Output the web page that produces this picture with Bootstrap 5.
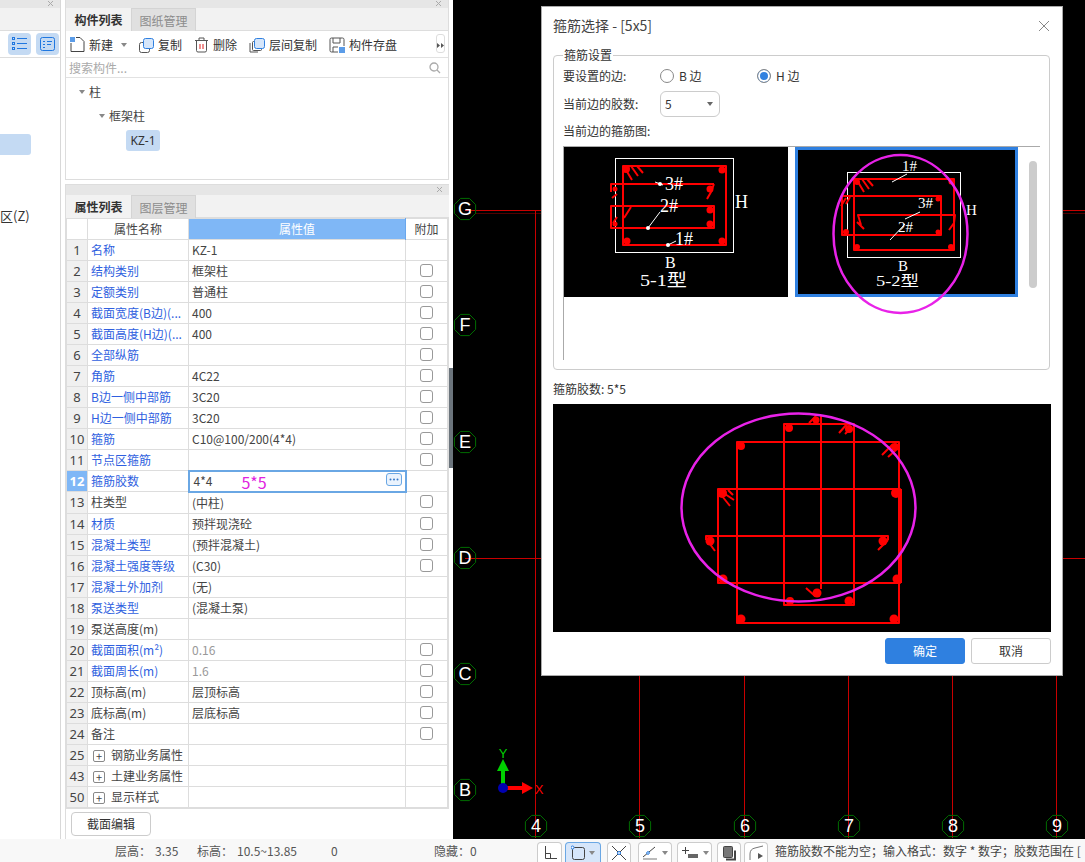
<!DOCTYPE html>
<html lang="zh">
<head>
  <meta charset="UTF-8" />
  <title>箍筋选择</title>
  <link rel="stylesheet" href="https://cdn.jsdelivr.net/npm/bootstrap@5.3.2/dist/css/bootstrap.min.css"/>
  <style>
    html, body { height: 862px; overflow: hidden; }
    body { font-family: "Noto Sans CJK SC", "Noto Sans", sans-serif; font-size: 12px; color: #333; background: #fff; }
    .app-main { height: 839px; }
    .side-strip { width: 61px; border-right: 1px solid #d8d8d8; overflow: hidden; }
    .pane-head { height: 8px; background: #e6e6e6; position: relative; }
    .pane-head svg { position: absolute; right: 5px; top: 0; }
    .pane-head-tall { height: 11px; border-top: 1px solid #ddd; }
    .strip-tabs { height: 23px; background: #f2f2f2; border-bottom: 1px solid #ddd; }
    .side-tools { height: 27px; padding: 2px 2px 0 8px; gap: 5px; border-bottom: 1px solid #ddd; }
    .sicon { width: 23px; height: 22px; background: #c4daf3; border-radius: 4px; }
    .strip-sel { width: 31px; height: 21px; background: #c4daf3; border-radius: 0 3px 3px 0; margin-top: 76px; }
    .strip-z { margin-top: 52px; font-size: 13px; line-height: 18px; }
    .center-col { width: 384px; margin-left: 4px; }
    .pane-top { height: 180px; border: 1px solid #ddd; border-top: 0; }
    .pane-bottom { margin-top: 4px; height: 655px; border-left: 1px solid #ddd; }
    .tabbar { height: 23px; background: #f2f2f2; border-bottom: 1px solid #ddd; flex-wrap: nowrap; }
    .tabbar .nav-link { width: 65px; height: 23px; padding: 0; text-align: center; line-height: 24px; font-size: 12px; }
    .tab-on { color: #333; font-weight: 700; background: #f2f2f2; }
    .tab-off { color: #8c8c8c; background: #e0e0e0; border: 1px solid #d4d4d4; border-bottom: 0; }
    .toolrow { height: 27px; border-bottom: 1px solid #e2e2e2; padding: 2px 0 0 4px; position: relative; }
    .tbtn { gap: 4px; font-size: 12px; line-height: 16px; white-space: nowrap; }
    .tbtn-copy { margin-left: 11px; }
    .tbtn-del { margin-left: 12px; }
    .tbtn-floor { margin-left: 12px; }
    .tbtn-save { margin-left: 12px; }
    .drop-tri { width: 0; height: 0; border: 3px solid transparent; border-top: 4px solid #888; border-bottom: 0; }
    .more-btn { position: absolute; right: 3px; top: 3px; width: 9px; height: 19px; border: 1px solid #ddd; border-radius: 3px; background: #fff; }
    .searchrow { height: 20px; border-bottom: 1px solid #e2e2e2; padding: 0 7px 0 3px; color: #aaa; font-size: 12px; }
    .tree-row { line-height: 16px; height: 16px; color: #444; }
    .tree-one { margin: 6px 0 0 13px; gap: 4px; }
    .tree-two { margin: 8px 0 0 33px; gap: 4px; }
    .tree-chip { margin: 6px 0 0 60px; width: 34px; height: 21px; line-height: 21px; text-align: center; background: #c4daf3; border-radius: 3px; font-family: "Noto Sans", sans-serif; }
    .proptable-wrap { width: 383px; border-bottom: 1px solid #ddd; border-right: 1px solid #ddd; }
    .proptable { table-layout: fixed; width: 381px; font-size: 12px; border-color: #ddd; color: #333; }
    .proptable > :not(caption) > * > * { padding: 0 3px; height: 21px; line-height: 20px; white-space: nowrap; overflow: hidden; color: #444; box-shadow: none; }
    .proptable > thead > tr > * { height: 21px; font-weight: 400; text-align: center; background: #fff; }
    .proptable > thead > tr > .head-on { background: #7fb7f6; color: #fff; border-color: #6aa7ec; }
    .proptable > tbody > tr > .num { text-align: center; background: #f0f0f0; padding: 0; font-family: "Noto Sans", sans-serif; font-size: 13px; }
    .proptable > tbody > tr > .num-on { background: #7fb7f6; color: #fff; font-weight: 700; }
    .proptable > tbody > tr > .lbl-blue { color: #2f5fe0; }
    .proptable > tbody > tr > .val-grey { color: #999; }
    .proptable > tbody > tr > .val-edit { border: 2px solid #6aa7e4; padding: 0 3px 0 4px; position: relative; line-height: 17px; overflow: visible; }
    .edit-hint { color: #e022e0; font-size: 16px; line-height: 17px; margin-left: 29px; vertical-align: -3px; }
    .edit-more { position: absolute; right: 3px; top: 1px; width: 16px; height: 13px; border: 1px solid #6aa7e4; border-radius: 3px; background: #eaf3fd; }
    .edit-more svg { display: block; }
    .chk { width: 13px; height: 13px; margin: 3px auto 0; border: 1px solid #999; border-radius: 3px; display: block; float: none; }
    .plusbox { display: inline-block; width: 12px; height: 12px; border: 1px solid #888; border-radius: 2px; line-height: 10px; text-align: center; font-size: 11px; margin: 0 6px 0 2px; vertical-align: -1px; }
    .section-btn { width: 80px; height: 24px; padding: 0; margin: 3px 0 0 5px; font-size: 12px; line-height: 22px; color: #333; background: #fff; border: 1px solid #ccc; border-radius: 4px; }
    .split-col { width: 4px; }
    .split-grip { width: 4px; height: 100px; background: #6b747c; margin-top: 368px; }
    .cad-view { background: #000; position: relative; overflow: hidden; }
    .cad-svg { position: absolute; left: 0; top: 0; }
    .dlg { position: absolute; left: 88px; top: 6px; width: 522px; height: 670px; background: #fff; border: 1px solid #aaa; }
    .dlg-title { height: 40px; padding: 0 11px 3px; font-size: 14px; color: #444; }
    .close-x { margin-right: 1px; }
    .dlg-set { margin: 0 12px 0 11px; padding: 0 9px; border: 1px solid #ccc; border-radius: 4px; height: 323px; }
    .dlg-set legend { float: none; width: auto; margin: 0; padding: 0 1px; font-size: 12px; line-height: 16px; }
    .set-row { height: 26px; }
    .set-row-sel { margin-top: 2px; }
    .set-lab { width: 97px; }
    .radio-lab { width: 97px; gap: 2px; font-size: 12px; }
    .rd { width: 14px; height: 14px; margin: 0 3px 0 0; border: 1px solid #888; float: none; flex-shrink: 0; }
    .rd:checked { background-color: #2f80e0; background-image: none; border-color: #888; box-shadow: inset 0 0 0 2px #fff; }
    .sel-five { width: 60px; height: 26px; padding: 0 0 0 4px; font-size: 12px; border-color: #ccc; background-image: url("data:image/svg+xml,%3csvg xmlns='http://www.w3.org/2000/svg' viewBox='0 0 8 5'%3e%3cpath fill='%23666' d='M1 0h6L4 4z'/%3e%3c/svg%3e"); background-position: right 5px center; background-size: 8px 5px; color: #333; }
    .list-lab { height: 18px; line-height: 18px; margin-top: 5px; }
    .shapes { height: 214px; margin-top: 6px; border-top: 1px solid #aaa; border-left: 1px solid #aaa; gap: 7px; }
    .thumb { display: block; flex-shrink: 0; }
    .thumb-bar { width: 8px; height: 127px; margin: 14px 0 0 4px; background: #ccc; border-radius: 4px; }
    .dlg-count { height: 34px; padding: 10px 0 0 11px; line-height: 18px; }
    .dlg-prev { display: block; margin: 0 0 0 11px; }
    .dlg-foot { margin: 6px 11px 0 0; gap: 6px; }
    .btn-ok, .btn-no { width: 80px; height: 26px; padding: 0; font-size: 12px; line-height: 24px; border-radius: 3px; }
    .btn-ok { background: #2f80e0; border-color: #2f80e0; color: #fff; }
    .btn-no { background: #fff; border-color: #ccc; color: #333; }
    .dlg-marks { position: absolute; left: -1px; top: -1px; pointer-events: none; }
    .statusbar { height: 23px; background: #f8f8f8; font-size: 12px; white-space: nowrap; overflow: hidden; }
    .stat-left { width: 537px; padding-left: 115px; line-height: 23px; color: #555; flex-shrink: 0; }
    .stat-a { width: 82px; } .stat-b { width: 134px; } .stat-c { width: 103px; }
    .stat-val { margin-left: 4px; }
    .stbtn { height: 20px; margin-top: 3px; border: 1px solid #ccc; border-bottom: 0; border-radius: 4px 4px 0 0; background: #fff; flex-shrink: 0; justify-content: center; gap: 4px; }
    .stbtn-on { background: #d6e6fa; border-color: #6aa7e4; }
    .stb-1 { width: 25px; }
    .stb-2 { width: 36px; margin-left: 3px; }
    .stb-3 { width: 24px; margin-left: 6px; }
    .stb-4 { width: 34px; margin-left: 7px; }
    .stb-5 { width: 35px; margin-left: 5px; }
    .stb-6 { width: 24px; margin-left: 5px; }
    .stb-7 { width: 24px; margin-left: 3px; }
    .stat-msg { margin-left: 7px; line-height: 23px; color: #444; }
  </style>
</head>
<body>
  <div class="app-main d-flex">
    <!-- panel izquierdo recortado -->
    <div class="side-strip flex-shrink-0">
      <div class="pane-head"><svg width="9" height="8"><path d="M2 1l5 5M7 1l-5 5" stroke="#aaa" fill="none"/></svg></div>
      <div class="strip-tabs"></div>
      <div class="side-tools d-flex">
        <div class="sicon flex-shrink-0"><svg width="23" height="22"><g fill="none" stroke="#1f77e0"><rect x="4.500" y="4.500" width="2" height="2"/><rect x="4.500" y="9.500" width="2" height="2"/><rect x="4.500" y="14.500" width="2" height="2"/><path d="M9 5.500h10M9 10.500h10M9 15.500h10"/></g></svg></div>
        <div class="sicon flex-shrink-0"><svg width="23" height="22"><g fill="none" stroke="#1f77e0"><rect x="4.500" y="4.500" width="14" height="13" rx="2"/><path d="M7 8.500h2M11 8.500h5M7 11.500h2M11 11.500h4M7 14.500h2"/></g></svg></div>
      </div>
      <div class="strip-sel"></div>
      <div class="strip-z">区(Z)</div>
    </div>

    <div class="center-col flex-shrink-0">
      <div class="pane-top">
        <div class="pane-head"><svg width="9" height="8"><path d="M2 1l5 5M7 1l-5 5" stroke="#aaa" fill="none"/></svg></div>
        <div class="nav tabbar">
          <a class="nav-link tab-on">构件列表</a>
          <a class="nav-link tab-off">图纸管理</a>
        </div>
        <div class="toolrow d-flex align-items-center">
          <div class="tbtn d-flex align-items-center">
            <svg width="15" height="16"><rect x="0" y="0" width="5" height="5" fill="#5b9ce8"/><path d="M1 6v8.500h13v-10l-4-4H6" fill="none" stroke="#444"/></svg>新建
          </div>
          <div class="drop-tri ms-2"></div>
          <div class="tbtn tbtn-copy d-flex align-items-center">
            <svg width="16" height="16"><rect x="1.500" y="5.500" width="10" height="10" rx="2" fill="#fff" stroke="#555"/><rect x="5.500" y="1.500" width="10" height="10" rx="2" fill="#d6e6fa" stroke="#2f80e0"/></svg>复制
          </div>
          <div class="tbtn tbtn-del d-flex align-items-center">
            <svg width="15" height="16"><path d="M1 3.500h13M5 3V1h5v2M2.500 4v9.500a1.500 1.500 0 0 0 1.500 1.500h7a1.500 1.500 0 0 0 1.500-1.500V4" fill="none" stroke="#555"/><path d="M6 7v5M9 7v5" stroke="#e02020"/></svg>删除
          </div>
          <div class="tbtn tbtn-floor d-flex align-items-center">
            <svg width="16" height="16"><path d="M1 6v9h8" fill="none" stroke="#555"/><rect x="3.500" y="4.500" width="9" height="9" rx="1" fill="#fff" stroke="#555"/><rect x="5.500" y="1.500" width="10" height="10" rx="2" fill="#d6e6fa" stroke="#2f80e0"/></svg>层间复制
          </div>
          <div class="tbtn tbtn-save d-flex align-items-center">
            <svg width="16" height="16"><path d="M9 15H2.500A1.500 1.500 0 0 1 1 13.500v-11A1.500 1.500 0 0 1 2.500 1h11A1.500 1.500 0 0 1 15 2.500V9M4 1v5h7V1M4 15v-5h5" fill="none" stroke="#555"/><rect x="10" y="10" width="6" height="6" fill="#5b9ce8"/></svg>构件存盘
          </div>
          <div class="more-btn"><svg width="7" height="17"><path d="M0 6l3 2.500L0 11zM4 6l3 2.500L4 11z" fill="#555"/></svg></div>
        </div>
        <div class="searchrow d-flex align-items-center justify-content-between">
          <span>搜索构件...</span>
          <svg width="12" height="12"><circle cx="5" cy="5" r="4" fill="none" stroke="#aaa" stroke-width="1.300"/><path d="M8 8l3 3" stroke="#aaa" stroke-width="1.300"/></svg>
        </div>
        <div class="tree-row tree-one d-flex align-items-center"><span class="drop-tri"></span>柱</div>
        <div class="tree-row tree-two d-flex align-items-center"><span class="drop-tri"></span>框架柱</div>
        <div class="tree-chip">KZ-1</div>
      </div>

      <div class="pane-bottom">
        <div class="pane-head pane-head-tall"><svg width="9" height="9"><path d="M2 2l5 5M7 2l-5 5" stroke="#aaa" fill="none"/></svg></div>
        <div class="nav tabbar">
          <a class="nav-link tab-on">属性列表</a>
          <a class="nav-link tab-off">图层管理</a>
        </div>
        <div class="proptable-wrap">
          <table class="table table-bordered proptable mb-0">
            <colgroup><col style="width:21px"><col style="width:101px"><col style="width:217px"><col style="width:42px"></colgroup>
            <thead><tr><th></th><th>属性名称</th><th class="head-on">属性值</th><th>附加</th></tr></thead>
            <tbody id="prop-body"></tbody>
          </table>
        </div>
        <button type="button" class="btn section-btn">截面编辑</button>
      </div>
    </div>

    <div class="split-col flex-shrink-0"><div class="split-grip"></div></div>

    <div class="cad-view flex-grow-1">
      <svg id="cad-svg" class="cad-svg" width="632" height="839" viewBox="453 0 632 839"></svg>

      <div class="dlg">
        <div class="dlg-title d-flex align-items-center justify-content-between">
          <span>箍筋选择 - [5x5]</span>
          <svg class="close-x" width="12" height="12"><path d="M1 1l10 10M11 1L1 11" stroke="#888" fill="none"/></svg>
        </div>
        <fieldset class="dlg-set">
          <legend>箍筋设置</legend>
          <div class="set-row d-flex align-items-center">
            <div class="set-lab">要设置的边:</div>
            <label class="radio-lab d-flex align-items-center"><input class="form-check-input rd" type="radio" name="lado"> B 边</label>
            <label class="radio-lab d-flex align-items-center"><input class="form-check-input rd" type="radio" name="lado" checked> H 边</label>
          </div>
          <div class="set-row set-row-sel d-flex align-items-center">
            <div class="set-lab">当前边的胶数:</div>
            <select class="form-select sel-five"><option>5</option></select>
          </div>
          <div class="list-lab">当前边的箍筋图:</div>
          <div class="shapes d-flex align-items-start">
            <svg class="thumb" width="224" height="150" viewBox="564 147 224 150">
              <rect x="564" y="147" width="224" height="150" fill="#000"/>
              <rect x="615.500" y="158.500" width="118" height="94" fill="none" stroke="#fff"/>
              <g fill="none" stroke="#f00" stroke-width="2" stroke-linejoin="round">
                <rect x="623" y="166" width="103" height="79"/>
                <path d="M611 192v-8h103M714 184l-3 8-4 7M611 206h103v22H611z"/>
                <path d="M626 170l6 10M631 166l7 10M637 166l6 7M624 218l7-11M617 194l-5 4M617 217l-4 6"/>
              </g>
              <g fill="#f00"><circle cx="626" cy="169" r="4"/><circle cx="722" cy="170" r="3.500"/><circle cx="627" cy="241" r="3.500"/><circle cx="722" cy="241" r="3.500"/><circle cx="710" cy="189" r="3.500"/><circle cx="710" cy="210" r="3.500"/><circle cx="710" cy="224" r="3.500"/><circle cx="615" cy="189" r="2.500"/><circle cx="615" cy="224" r="2.500"/></g>
              <g fill="#fff"><circle cx="660" cy="184" r="2"/><circle cx="648" cy="228" r="2"/><circle cx="668" cy="245" r="2"/></g>
              <path d="M655 182l8 3M648 228l12-16M668 245l8-4" stroke="#fff" fill="none"/>
              <g fill="#fff" font-family="Liberation Serif, serif" font-size="18">
                <text x="665" y="190">3#</text><text x="660" y="212">2#</text><text x="675" y="245">1#</text><text x="735" y="208">H</text><text x="665" y="268" font-size="16">B</text>
                <text x="640" y="286" font-size="17" textLength="47" lengthAdjust="spacingAndGlyphs" font-family="Liberation Serif, Noto Sans CJK SC, serif">5-1型</text>
              </g>
            </svg>
            <svg class="thumb" width="223" height="150" viewBox="795 147 223 150">
              <rect x="795" y="147" width="223" height="150" fill="#000"/>
              <rect x="796.500" y="148.500" width="220" height="147" fill="none" stroke="#2f80e0" stroke-width="3"/>
              <rect x="847.500" y="172.500" width="113" height="85" fill="none" stroke="#fff"/>
              <g fill="none" stroke="#f00" stroke-width="2" stroke-linejoin="round">
                <rect x="854" y="179" width="100" height="71"/>
                <rect x="842" y="196" width="99" height="39"/>
                <path d="M861 225l-3-10h97l-1 8-5 7M857 222l7 7"/>
                <path d="M858 182l6 10M862 179l7 10M867 179l6 7M846 198l-5 8M850 197l-4 7"/>
              </g>
              <g fill="#f00"><circle cx="857" cy="182" r="3"/><circle cx="951" cy="182" r="2.500"/><circle cx="857" cy="247" r="3"/><circle cx="951" cy="247" r="3"/><circle cx="938" cy="199" r="2.500"/><circle cx="846" cy="232" r="3"/><circle cx="938" cy="232" r="2.500"/></g>
              <path d="M892 182l15-8M905 219l15-7M890 240l15-16" stroke="#fff" fill="none"/>
              <g fill="#fff" font-family="Liberation Serif, serif" font-size="15">
                <text x="902" y="171">1#</text><text x="918" y="208">3#</text><text x="898" y="232">2#</text><text x="966" y="215">H</text><text x="898" y="271">B</text>
                <text x="876" y="286" textLength="43" lengthAdjust="spacingAndGlyphs" font-family="Liberation Serif, Noto Sans CJK SC, serif">5-2型</text>
              </g>
            </svg>
            <div class="thumb-bar flex-shrink-0"></div>
          </div>
        </fieldset>
        <div class="dlg-count">箍筋胶数: 5*5</div>
        <svg class="dlg-prev" width="498" height="228" viewBox="553 404 498 228">
          <rect x="553" y="404" width="498" height="228" fill="#000"/>
          <g fill="none" stroke="#f00" stroke-width="2" stroke-linejoin="round">
            <rect x="737" y="442" width="162" height="181"/>
            <rect x="784" y="424" width="70" height="181"/>
            <rect x="718" y="489" width="182" height="94"/>
            <path d="M706 540v-4h182v4M821 416v173"/>
            <path d="M900 489v94" stroke-width="4"/>
            <path d="M722 492l12 8M722 496l8 10M728 490l5 5M707 540l8 11M888 540l-10 10M806 588l9 8M809 423l7-7M847 424l-8 9M851 428l-6 6M893 444l-11 11M896 450l-8 7"/>
          </g>
          <g fill="#f00"><circle cx="741" cy="446" r="4"/><circle cx="789" cy="428" r="4"/><circle cx="849" cy="429" r="4"/><circle cx="895" cy="447" r="4"/><circle cx="722" cy="493" r="5"/><circle cx="896" cy="493" r="5"/><circle cx="710" cy="541" r="4.500"/><circle cx="883" cy="541" r="4.500"/><circle cx="723" cy="579" r="4.500"/><circle cx="897" cy="579" r="4.500"/><circle cx="817" cy="593" r="4.500"/><circle cx="790" cy="601" r="4"/><circle cx="849" cy="601" r="4.500"/><circle cx="741" cy="619" r="4.500"/><circle cx="894" cy="619" r="4.500"/><circle cx="816" cy="420" r="3.500"/></g>
        </svg>
        <div class="dlg-foot d-flex justify-content-end">
          <button type="button" class="btn btn-ok">确定</button>
          <button type="button" class="btn btn-no">取消</button>
        </div>
        <!-- circulos de marca por encima del dialogo -->
        <svg class="dlg-marks" width="522" height="670" viewBox="541 6 522 670">
          <g fill="none" stroke="#e822e8" stroke-width="2.500">
            <ellipse cx="900.500" cy="234" rx="67" ry="79"/>
            <ellipse cx="798.500" cy="507.500" rx="117" ry="94"/>
          </g>
        </svg>
      </div>
    </div>
  </div>

  <div class="statusbar d-flex">
    <div class="stat-left d-flex">
      <span class="stat-a">层高：<span class="stat-val">3.35</span></span>
      <span class="stat-b">标高：<span class="stat-val">10.5~13.85</span></span>
      <span class="stat-c">0</span>
      <span>隐藏：0</span>
    </div>
    <div class="stbtn stb-1 d-flex align-items-center"><svg width="14" height="14"><path d="M2.500 0v12.500H14M2.500 7.500h5v5" fill="none" stroke="#444"/></svg></div>
    <div class="stbtn stbtn-on stb-2 d-flex align-items-center"><svg width="14" height="16"><rect x="1.500" y="2.500" width="12" height="12" rx="2" fill="none" stroke="#444"/><circle cx="1.500" cy="2.500" r="1.500" fill="#fff" stroke="#1f77e0"/></svg><span class="drop-tri"></span></div>
    <div class="stbtn stb-3 d-flex align-items-center"><svg width="16" height="16"><path d="M1 1l14 14M15 1L1 15" stroke="#444" fill="none"/><circle cx="8" cy="8" r="1.500" fill="#fff" stroke="#1f77e0"/></svg></div>
    <div class="stbtn stb-4 d-flex align-items-center"><svg width="16" height="15"><path d="M1 12L13 2" stroke="#444" fill="none"/><path d="M1 14h14" stroke="#bbb" stroke-width="2"/><circle cx="6" cy="8" r="1.300" fill="#fff" stroke="#1f77e0"/></svg><span class="drop-tri"></span></div>
    <div class="stbtn stb-5 d-flex align-items-center"><svg width="18" height="14"><path d="M1 4.500h7M4.500 1v7" stroke="#444" fill="none"/><rect x="7" y="8" width="10" height="4" fill="#666"/></svg><span class="drop-tri"></span></div>
    <div class="stbtn stb-6 d-flex align-items-center"><svg width="15" height="16"><rect x="1.500" y="1.500" width="9" height="11" rx="1" fill="#777" stroke="#444"/><path d="M4 14.500h9v-9" fill="none" stroke="#444" stroke-width="2"/></svg></div>
    <div class="stbtn stb-7 d-flex align-items-center"><svg width="17" height="15"><path d="M2 15V9q0-5 5-6l8-2" stroke="#777" fill="none"/><path d="M10 8l5 3-5 3z" fill="#555"/></svg></div>
    <div class="stat-msg">箍筋胶数不能为空；输入格式：数字 * 数字；胶数范围在 [</div>
  </div>

  <script>
    // filas: [num, nombre, valor, azul, checkbox, gris]
    const filas = [
      [1, '名称', 'KZ-1', 1, 0],
      [2, '结构类别', '框架柱', 1, 1],
      [3, '定额类别', '普通柱', 1, 1],
      [4, '截面宽度(B边)(...', '400', 1, 1],
      [5, '截面高度(H边)(...', '400', 1, 1],
      [6, '全部纵筋', '', 1, 1],
      [7, '角筋', '4C22', 1, 1],
      [8, 'B边一侧中部筋', '3C20', 1, 1],
      [9, 'H边一侧中部筋', '3C20', 1, 1],
      [10, '箍筋', 'C10@100/200(4*4)', 1, 1],
      [11, '节点区箍筋', '', 1, 1],
      [12, '箍筋胶数', '', 1, 0],
      [13, '柱类型', '(中柱)', 0, 1],
      [14, '材质', '预拌现浇砼', 1, 1],
      [15, '混凝土类型', '(预拌混凝土)', 1, 1],
      [16, '混凝土强度等级', '(C30)', 1, 1],
      [17, '混凝土外加剂', '(无)', 1, 0],
      [18, '泵送类型', '(混凝土泵)', 1, 0],
      [19, '泵送高度(m)', '', 0, 0],
      [20, '截面面积(m²)', '0.16', 1, 1, 1],
      [21, '截面周长(m)', '1.6', 1, 1, 1],
      [22, '顶标高(m)', '层顶标高', 0, 1],
      [23, '底标高(m)', '层底标高', 0, 1],
      [24, '备注', '', 0, 1],
      [25, '+钢筋业务属性', '', 0, 0],
      [43, '+土建业务属性', '', 0, 0],
      [50, '+显示样式', '', 0, 0]
    ];

    document.getElementById('prop-body').innerHTML = filas.map(f => {
      const [n, nombre, valor, azul, chk, gris] = f;
      const etiqueta = nombre[0] === '+' ? `<span class="plusbox">+</span>${nombre.slice(1)}` : nombre;
      const celdaValor = n === 12
        ? `<td class="val-edit">4*4<span class="edit-hint">5*5</span><span class="edit-more"><svg width="14" height="11"><g fill="#3578c8"><circle cx="3.500" cy="5.500" r="1"/><circle cx="7" cy="5.500" r="1"/><circle cx="10.500" cy="5.500" r="1"/></g></svg></span></td>`
        : `<td class="${gris ? 'val-grey' : ''}">${valor}</td>`;
      return `<tr>
        <td class="num ${n === 12 ? 'num-on' : ''}">${n}</td>
        <td class="${azul ? 'lbl-blue' : ''}">${etiqueta}</td>
        ${celdaValor}
        <td>${chk ? '<input class="form-check-input chk" type="checkbox">' : ''}</td>
      </tr>`;
    }).join('');

    // ejes del plano
    function burbuja(x, y, letra) {
      const pts = [];
      for (let i = 0; i < 8; i++) {
        const a = Math.PI / 8 + i * Math.PI / 4;
        pts.push((x + 11.5 * Math.cos(a)).toFixed(1) + ',' + (y + 11.5 * Math.sin(a)).toFixed(1));
      }
      return `<polygon points="${pts.join(' ')}" fill="none" stroke="#006c00"/>
        <text x="${x}" y="${y + 6}" text-anchor="middle" fill="#fff" font-family="Liberation Sans, sans-serif" font-size="18">${letra}</text>`;
    }
    const vert = [[536, '4'], [640, '5'], [745, '6'], [849, '7'], [953, '8'], [1057, '9']];
    const horiz = [[209, 'G'], [325, 'F'], [442, 'E'], [558, 'D'], [674, 'C'], [790, 'B']];
    document.getElementById('cad-svg').innerHTML =
      `<path d="M465 210.500H1085" stroke="#c80000"/><path d="M475 213.500H1085" stroke="#500000"/><path d="M465 558.500H1085" stroke="#c80000"/>` +
      vert.map(v => `<path d="M${v[0] - .5} 210V838" stroke="#c80000"/>`).join('') +
      horiz.map(h => burbuja(465, h[0], h[1])).join('') +
      vert.map(v => burbuja(v[0], 826, v[1])).join('') +
      `<path d="M503 788V768" stroke="#00d000" stroke-width="4"/><path d="M503 759l6 12h-12z" fill="#00d000"/>
       <path d="M503 788H524" stroke="#f00" stroke-width="4"/><path d="M533 788l-11 6v-12z" fill="#f00"/>
       <circle cx="503" cy="788" r="5" fill="#0000b0"/>
       <text x="503" y="758" text-anchor="middle" fill="#00d000" font-family="Liberation Sans, sans-serif" font-size="13">Y</text>
       <text x="539" y="794" text-anchor="middle" fill="#f00" font-family="Liberation Sans, sans-serif" font-size="13">X</text>`;
  </script>
  <script src="https://cdn.jsdelivr.net/npm/bootstrap@5.3.2/dist/js/bootstrap.bundle.min.js"></script>
</body>
</html>
